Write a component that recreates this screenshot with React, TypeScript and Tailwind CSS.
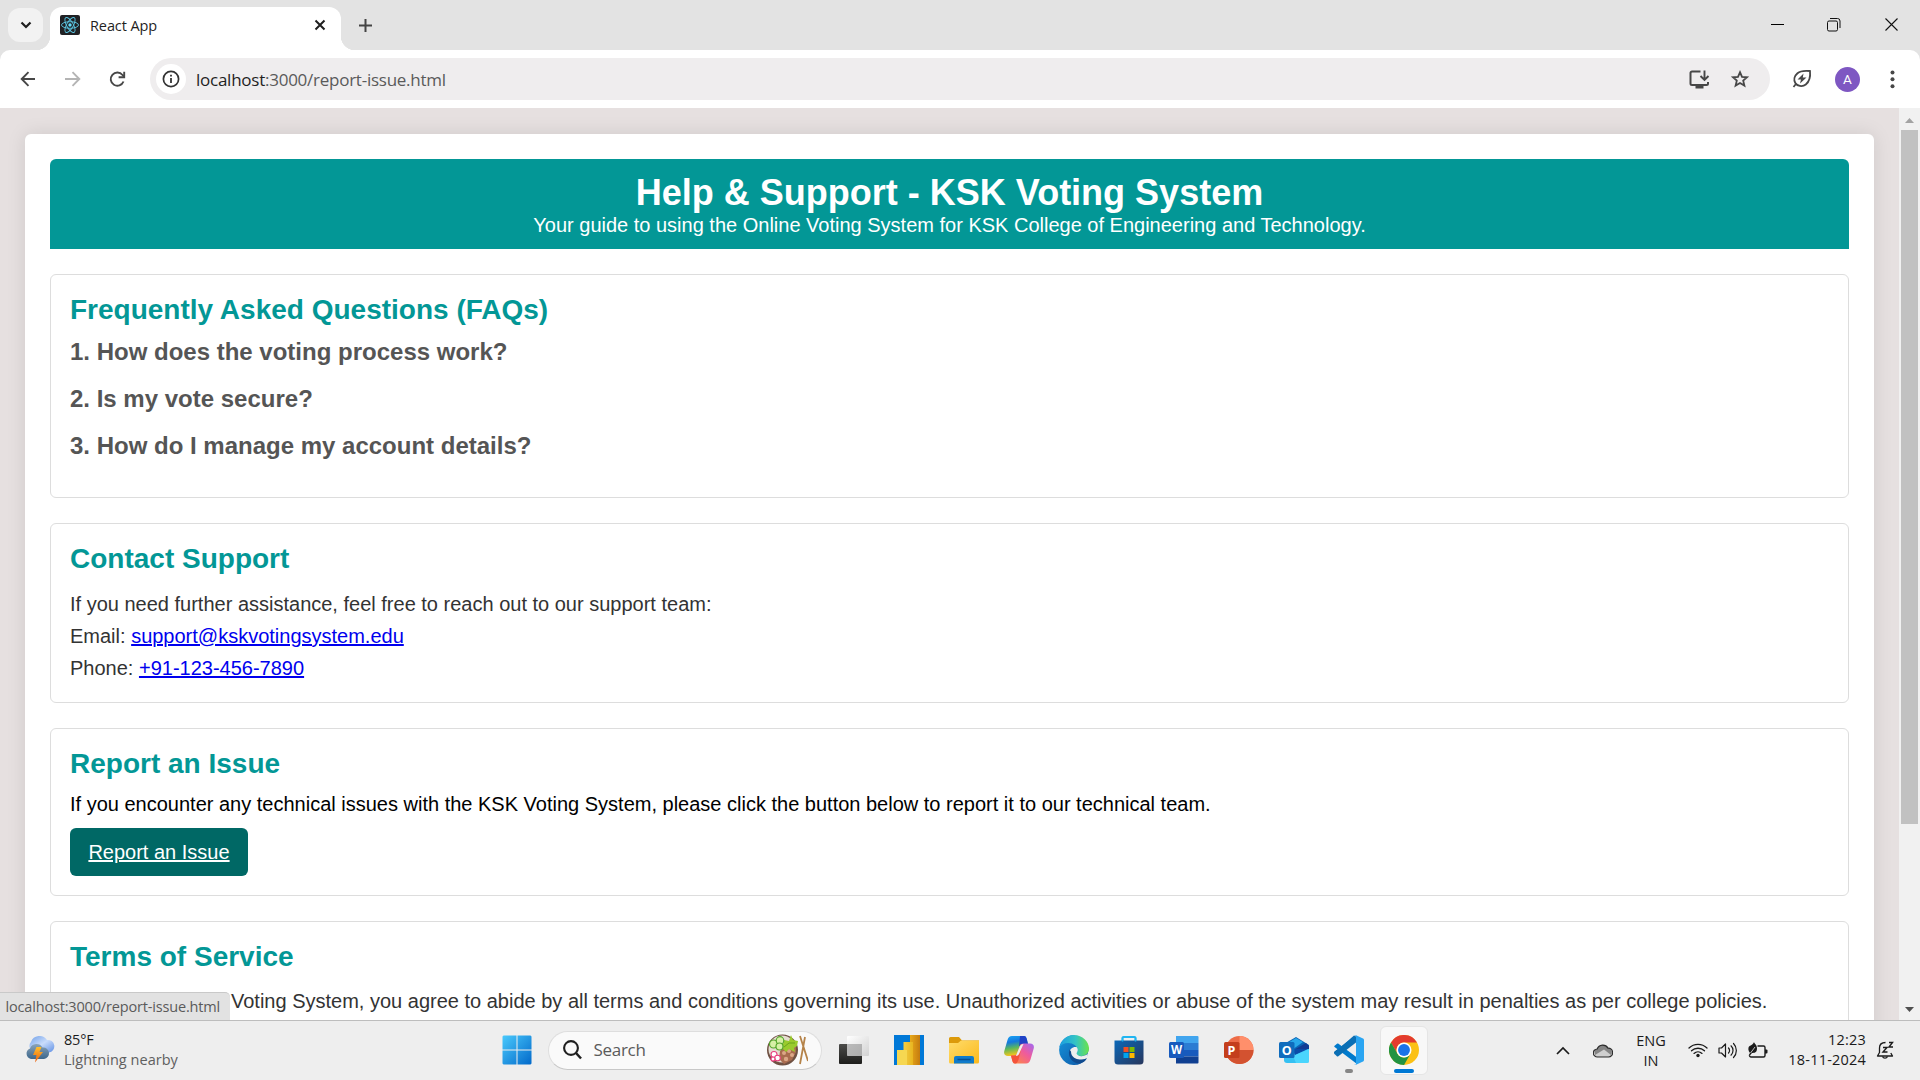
import React from "react";

const Svg = ({ w = 30, h = 30, vb, children, className = "" }: { w?: number; h?: number; vb?: string; children: React.ReactNode; className?: string }) => (
  <svg width={w} height={h} viewBox={vb ?? `0 0 ${w} ${h}`} className={`block shrink-0 ${className}`} fill="none">
    {children}
  </svg>
);

function TabStrip() {
  return (
    <div className="flex h-[50px] bg-[#e3e3e3]">
      <div className="mt-2 ml-2 flex h-[34px] w-[35px] items-center justify-center rounded-xl bg-[#f2f2f2]">
        <Svg w={12} h={8}>
          <path d="M1.5 1.5 6 6l4.500-4.500" stroke="#1f1f1f" strokeWidth="2.200" />
        </Svg>
      </div>
      <div className="relative mt-[7px] ml-[7px] flex h-[43px] w-[291px] items-center rounded-t-xl bg-white pb-[7px] pl-[10px]">
        <div className="absolute bottom-0 -left-[14px] size-[14px] bg-[radial-gradient(circle_at_0_0,transparent_14px,#fff_14.500px)]" />
        <div className="absolute -right-[14px] bottom-0 size-[14px] bg-[radial-gradient(circle_at_100%_0,transparent_14px,#fff_14.500px)]" />
        <Svg w={20} h={20}>
          <rect width="20" height="20" rx="2" fill="#202124" />
          <g stroke="#5cc8e4" strokeWidth="0.900">
            <ellipse cx="10" cy="10" rx="8.500" ry="3.300" />
            <ellipse cx="10" cy="10" rx="8.500" ry="3.300" transform="rotate(60 10 10)" />
            <ellipse cx="10" cy="10" rx="8.500" ry="3.300" transform="rotate(120 10 10)" />
          </g>
          <circle cx="10" cy="10" r="1.700" fill="#61dafb" />
        </Svg>
        <span className="mt-px ml-[10px] text-[14.500px] tracking-[-0.100px] text-[#1f1f1f]">React App</span>
        <Svg w={12} h={12} className="mr-[15px] ml-auto">
          <path d="M1.500 1.500l9 9M10.500 1.500l-9 9" stroke="#1f1f1f" strokeWidth="2" />
        </Svg>
      </div>
      <Svg w={13} h={13} className="mt-[19px] ml-[18px]">
        <path d="M6.500 0v13M0 6.500h13" stroke="#444" strokeWidth="2" />
      </Svg>
      <div className="ml-auto flex pt-[17px] pr-[21px]">
        <Svg w={15} h={15} className="mr-[41px]">
          <path d="M1 7.500h13" stroke="#000" />
        </Svg>
        <Svg w={15} h={15} className="mr-[43px]">
          <rect x="1.500" y="4" width="10" height="10" rx="1.500" stroke="#111" />
          <path d="M4 1.500h7.500a2.500 2.500 0 0 1 2.500 2.500V11" stroke="#111" />
        </Svg>
        <Svg w={15} h={15}>
          <path d="M1.500 1.500l12 12M13.500 1.500l-12 12" stroke="#111" strokeWidth="1.100" />
        </Svg>
      </div>
    </div>
  );
}

function Toolbar() {
  return (
    <div className="bg-[#e3e3e3]">
      <div className="flex h-[58px] items-center rounded-t-[10px] bg-white">
        <Svg w={16} h={16} className="ml-5">
          <path d="M15 8H2M8.500 1.200 1.700 8l6.800 6.800" stroke="#474747" strokeWidth="1.900" />
        </Svg>
        <Svg w={16} h={16} className="ml-[29px]">
          <path d="M0 8h14M7.500 1.200 14.300 8l-6.800 6.800" stroke="#b4b4b4" strokeWidth="1.900" />
        </Svg>
        <Svg w={17} h={17} className="ml-[28px]">
          <path d="M14.500 10.500A6.600 6.600 0 1 1 13.500 4l1.500 1.700" stroke="#474747" strokeWidth="1.900" />
          <path d="M15.200.8V6.300H9.600" stroke="#474747" strokeWidth="1.900" />
        </Svg>
        <div className="ml-[24px] flex h-[42px] w-[1620px] items-center rounded-full bg-[#efedee] pl-[6px]">
          <div className="flex size-[30px] items-center justify-center rounded-full bg-white">
            <Svg w={18} h={18}>
              <circle cx="9" cy="9" r="7.600" stroke="#333" strokeWidth="1.700" />
              <path d="M9 8v5M9 4.800v1.800" stroke="#333" strokeWidth="1.800" />
            </Svg>
          </div>
          <span className="mt-px ml-[10px] text-[17px] tracking-[-0.250px] text-[#1f1f1f]">
            localhost<span className="text-[#5a5a5a]">:3000/report-issue.html</span>
          </span>
          <Svg w={21} h={19} className="mr-[20px] ml-auto">
            <path d="M11.500 1.500H3a1.500 1.500 0 0 0-1.500 1.500v10.500A1.500 1.500 0 0 0 3 15h14.500a1.500 1.500 0 0 0 1.500-1.500V12" stroke="#474747" strokeWidth="2" />
            <path d="M6.500 16h8v2.500h-8z" fill="#474747" />
            <path d="M15.500.5v9M11.500 6l4 4 4-4" stroke="#474747" strokeWidth="1.900" />
          </Svg>
          <Svg w={20} h={20} className="mr-[20px]">
            <path d="M10 3.200l2 4.700 5 .4-3.800 3.300 1.200 5L10 14l-4.400 2.600 1.200-5L3 8.300l5-.4z" stroke="#474747" strokeWidth="1.800" />
          </Svg>
        </div>
        <Svg w={20} h={20} className="ml-[22px]">
          <path d="M18 2c-6-.600-10 0-12.500 2.200C2.200 7 1.500 11 3.300 14c1.700 3 7 4.300 10.500 1.500C17.500 12.500 18.600 8 18 2zM4.300 14.500 1.500 18" stroke="#474747" strokeWidth="1.800" />
          <path d="M11.500 4.500 5.500 10.500h3.500l-1 4 6.500-6h-3.700z" fill="#474747" />
        </Svg>
        <div className="ml-[23px] flex size-[25px] items-center justify-center rounded-full bg-[#7e57c2] font-['Roboto',sans-serif] text-[13.500px] text-white">A</div>
        <Svg w={5} h={19} className="ml-[30px]">
          <g fill="#474747">
            <circle cx="2.500" cy="2.500" r="2" />
            <circle cx="2.500" cy="9.300" r="2" />
            <circle cx="2.500" cy="16.200" r="2" />
          </g>
        </Svg>
      </div>
    </div>
  );
}

const Card = ({ title, className, children }: { title: string; className: string; children: React.ReactNode }) => (
  <section className={`mt-[25px] shrink-0 rounded-[6px] border border-[#ddd] px-[19px] pt-[19px] ${className}`}>
    <h2 className="text-[28px] leading-8 font-bold text-[#039796]">{title}</h2>
    {children}
  </section>
);

const questions = ["1. How does the voting process work?", "2. Is my vote secure?", "3. How do I manage my account details?"];

function Page() {
  return (
    <div className="flex h-[912px] overflow-hidden bg-[#e6e0e0] font-['Liberation_Sans',Arial,sans-serif] text-[20px]">
      <div className="mt-[26px] ml-[25px] flex h-[1100px] w-[1849px] flex-col rounded-[6px] bg-white p-[25px] shadow-[0_0_19px_rgba(0,0,0,0.1)]">
        <header className="h-[90px] shrink-0 rounded-t-[6px] bg-[#039796] pt-[13px] text-center text-white">
          <h1 className="text-[36px] leading-[41px] font-bold">Help &amp; Support - KSK Voting System</h1>
          <p className="mt-px leading-[23px]">Your guide to using the Online Voting System for KSK College of Engineering and Technology.</p>
        </header>
        <Card title="Frequently Asked Questions (FAQs)" className="h-[224px]">
          <div className="mt-3 flex flex-col gap-5">
            {questions.map((q) => (
              <h3 key={q} className="text-[24px] leading-[27px] font-bold text-[#555]">{q}</h3>
            ))}
          </div>
        </Card>
        <Card title="Contact Support" className="h-[180px]">
          <div className="mt-[13px] leading-8 text-[#333]">
            <p>If you need further assistance, feel free to reach out to our support team:</p>
            <p>Email: <a className="text-[#0000ee] underline">support@kskvotingsystem.edu</a></p>
            <p>Phone: <a className="text-[#0000ee] underline">+91-123-456-7890</a></p>
          </div>
        </Card>
        <Card title="Report an Issue" className="h-[168px]">
          <p className="mt-[13px] leading-[23px] text-black">
            If you encounter any technical issues with the KSK Voting System, please click the button below to report it to our technical team.
          </p>
          <a className="mt-3 flex h-12 w-[178px] items-center justify-center rounded-[6px] bg-[#006865] text-white underline">Report an Issue</a>
        </Card>
        <Card title="Terms of Service" className="h-[200px]">
          <p className="mt-3 pl-[161px] leading-8 whitespace-nowrap text-[#333]">
            Voting System, you agree to abide by all terms and conditions governing its use. Unauthorized activities or abuse of the system may result in penalties as per college policies.
          </p>
        </Card>
      </div>
      <div className="ml-auto flex w-[21px] flex-col items-center bg-[#f1f1f1] pt-[10px]">
        <Svg w={9} h={5}><path d="M0 5 4.500 0 9 5z" fill="#a3a3a3" /></Svg>
        <div className="mt-[7px] h-[694px] w-[17px] bg-[#c1c1c1]" />
        <Svg w={9} h={5} className="mt-auto mb-2"><path d="M0 0l4.500 5L9 0z" fill="#505050" /></Svg>
      </div>
    </div>
  );
}

function Weather() {
  return (
    <div className="flex w-[489.500px] items-center pl-[25px]">
      <Svg>
        <defs>
          <linearGradient id="wa" x2="1" y2="1"><stop stopColor="#6f9fe8" /><stop offset=".5" stopColor="#c9dcfb" /><stop offset="1" stopColor="#5f8fe4" /></linearGradient>
          <linearGradient id="wb" x2="0" y2="1"><stop stopColor="#8aa3b8" /><stop offset="1" stopColor="#3d678c" /></linearGradient>
          <linearGradient id="wc" x2="0" y2="1"><stop stopColor="#ffc02e" /><stop offset="1" stopColor="#ea5b0c" /></linearGradient>
        </defs>
        <path d="M7 16a6 6 0 0 1-1-9 9 9 0 0 1 16-2 6.300 6.300 0 0 1 2 12.500z" fill="url(#wa)" />
        <path d="M6 24a5.500 5.500 0 0 1-1-10.500 7 7 0 0 1 12.500-1A5.600 5.600 0 0 1 19 24z" fill="url(#wb)" />
        <path d="M11.500 12h5l-2 5h3.500l-8 10.500 1.500-7.500H8z" fill="url(#wc)" />
      </Svg>
      <div className="ml-[9px] text-[14.500px] leading-5">
        <div className="tracking-[-0.200px] text-[#1b1b1b]">85°F</div>
        <div className="tracking-[0.030px] text-[#606060]">Lightning nearby</div>
      </div>
    </div>
  );
}

const Cell = ({ children }: { children: React.ReactNode }) => (
  <div className="relative flex h-full w-[55px] shrink-0 items-center justify-center">{children}</div>
);

function Apps() {
  return (
    <>
      <Cell>
        <Svg>
          <defs><linearGradient id="win" gradientUnits="userSpaceOnUse" x1="0" y1="0" x2="30" y2="30"><stop stopColor="#4bcbfd" /><stop offset="1" stopColor="#0067c9" /></linearGradient></defs>
          <path d="M1.500.5H14.500v14H.5v-13zM15.500.5H28.500l1 1v13h-14zM.5 15.500h14v14h-13l-1-1zM15.500 15.500h14v13l-1 1h-13z" fill="url(#win)" />
        </Svg>
      </Cell>
      <div className="ml-[3px] flex h-[39px] w-[274px] shrink-0 items-center rounded-full border border-b-[#c8c8c8] border-[#dedede] bg-[#fafafa] pl-[14px]">
        <Svg w={19} h={20}>
          <circle cx="8" cy="8" r="6.900" stroke="#1f1f1f" strokeWidth="2.100" />
          <path d="M13 13l5 5.500" stroke="#1f1f1f" strokeWidth="2.500" />
        </Svg>
        <span className="ml-[12px] text-[17px] tracking-[-0.300px] text-[#5b5b5b]">Search</span>
        <Svg w={42} h={32} className="mr-[13px] ml-auto">
          <circle cx="16.500" cy="16" r="15.500" fill="#6f5143" />
          <circle cx="16" cy="15" r="13.500" fill="#e5ddd1" />
          <path d="M14 17l4-4 12-1v6l-4 8-8 4-5-5z" fill="#a96c4f" />
          <g fill="#dba787"><circle cx="18" cy="19" r="2" /><circle cx="23" cy="17" r="2" /><circle cx="20" cy="25" r="2.200" /><circle cx="26" cy="21" r="2" /></g>
          <path d="M16 14l2-8 5 1 2-6 2 5 5 1-1 5-3 2 1 4-6-3-3 3z" fill="#9acb2d" />
          <path d="M18 13l5-4 6 0" stroke="#6ba51a" />
          <g fill="#d7f0a6" stroke="#55a62c" strokeWidth="1.200"><circle cx="7.500" cy="10" r="4" /><circle cx="14" cy="6.500" r="3.800" /><circle cx="13.500" cy="12.500" r="3.500" /></g>
          <g fill="#fff" stroke="#e83d7d" strokeWidth="1.100"><circle cx="8" cy="20.500" r="3" /><circle cx="11.500" cy="24" r="2.800" /><circle cx="7" cy="25" r="2" /></g>
          <path d="M34 2l8 25M39 3l-5 27" stroke="#b58349" strokeWidth="1.800" />
        </Svg>
      </div>
      <div className="w-[4.500px] shrink-0" />
      <Cell>
        <Svg>
          <defs>
            <linearGradient id="tva" x2="0" y2="1"><stop stopColor="#4c4c4a" /><stop offset="1" stopColor="#1d1d1b" /></linearGradient>
            <linearGradient id="tvb" x2="1" y2="1"><stop stopColor="#fff" /><stop offset="1" stopColor="#d2d2d2" /></linearGradient>
          </defs>
          <rect x="0" y="9" width="23" height="20" rx="1" fill="url(#tva)" />
          <rect x="8" y="1" width="22" height="20" rx="1" fill="url(#tvb)" />
          <path d="M8 9h15v12H8z" fill="#888" opacity=".55" />
        </Svg>
      </Cell>
      <Cell>
        <Svg>
          <defs>
            <linearGradient id="pba" x2="1"><stop stopColor="#e7a91a" /><stop offset="1" stopColor="#c57b0f" /></linearGradient>
            <linearGradient id="pbb" x2="1"><stop stopColor="#f3cd45" /><stop offset="1" stopColor="#e8b51f" /></linearGradient>
          </defs>
          <path d="M0 0h30v30H0z" fill="#0078d7" />
          <path d="M16 0h10v30H16z" fill="url(#pba)" />
          <path d="M9.500 7h9.500v23H9.500z" fill="url(#pbb)" />
          <path d="M3 15h10v15H3z" fill="#f6d751" />
        </Svg>
      </Cell>
      <Cell>
        <Svg>
          <defs><linearGradient id="fo" x2="1" y2="1"><stop stopColor="#ffdc6b" /><stop offset="1" stopColor="#fbb91c" /></linearGradient></defs>
          <path d="M0 3.500A1.500 1.500 0 0 1 1.500 2H10l3 3.500h17V12H0z" fill="#dc9a0b" />
          <path d="M0 8h9l3-2.500h18V27a1.500 1.500 0 0 1-1.500 1.500h-27A1.500 1.500 0 0 1 0 27z" fill="url(#fo)" />
          <path d="M5 28.500V23a2 2 0 0 1 2-2h16a2 2 0 0 1 2 2v5.500z" fill="#0f7bcb" />
          <path d="M8.500 24.500h13" stroke="#064f92" strokeWidth="1.500" />
        </Svg>
      </Cell>
      <Cell>
        <Svg>
          <defs>
            <linearGradient id="coa" x2="0.2" y2="1"><stop stopColor="#1aa6f5" /><stop offset=".35" stopColor="#1478dd" /><stop offset=".65" stopColor="#5cb85b" /><stop offset="1" stopColor="#f5c51c" /></linearGradient>
            <linearGradient id="cob" x1="1" x2="0.1" y2="1"><stop stopColor="#a06af3" /><stop offset=".45" stopColor="#ef5b9c" /><stop offset="1" stopColor="#ff8a3d" /></linearGradient>
          </defs>
          <path d="M8 1h12c2 0 2.500 2 3 4l1 4h-5c-2 0-3 1-3.500 3l-2 6c-.8 2-2 3-4 3H4c-3 0-4.500-2-3.700-5L3.500 5C4.300 2.500 5.500 1 8 1z" fill="url(#coa)" />
          <path d="M16 1h4c2 0 2.500 2 3 4l1 4h-5c-2 0-3.300 1-4 3z" fill="#2042c6" />
          <path d="M22 28.500H11c-2 0-2.500-2-3-4l-1-4h3c2 0 3-1 3.500-3l2-6c.8-2 2-3 4-3H26c3 0 4.500 2 3.700 5l-3.200 11c-.8 2.500-2 4-4.500 4z" fill="url(#cob)" />
          <path d="M7 20.500h3c2 0 3-1 3.500-3l3-8h2l-3.500 13c-.5 3-1.500 6-4 6-2 0-2.500-2-3-4z" fill="#f4533b" />
          <path d="M15.500 12c.7-2 2-3 4-3l-4 9c-.7 2-2 3-3.700 3z" fill="#eee" />
        </Svg>
      </Cell>
      <Cell>
        <Svg>
          <defs>
            <linearGradient id="ea" x2="1"><stop stopColor="#1b9de2" /><stop offset=".55" stopColor="#33c4c4" /><stop offset="1" stopColor="#6be34c" /></linearGradient>
            <linearGradient id="eb" x2="1" y2="1"><stop stopColor="#1596dd" /><stop offset="1" stopColor="#0f55a4" /></linearGradient>
          </defs>
          <path d="M15 0a15 15 0 1 0 12.500 23.500L30 13z" fill="url(#eb)" />
          <path d="M.3 12.500C1.800 5 8 0 15 0c8.500 0 15 6.500 15 13.500 0 5-4 7.500-8 7.500-3 0-4.800-1-4.800-2 0-.8 1.300-1.300 1.300-4 0-4-4.500-7-9.300-7C5 8 1.800 10 .3 12.500z" fill="url(#ea)" />
          <path d="M10.500 18c0-4 3-6.500 7-6 1.500 1.500 1.700 3.500.7 5-1 1.200-.6 2.500.8 3.300 2.500 1.500 6.500 1 9.500-1.300v4l-5 2c-7 0-13-2-13-7z" fill="#eee" />
          <path d="M10.500 14.500C8 22 14 29 21 28.500c3-.5 5.500-2.500 6.800-5C22 26 12 24.500 12 16.500z" fill="#104b8f" />
        </Svg>
      </Cell>
      <Cell>
        <Svg>
          <defs><linearGradient id="st" x2="1" y2="1"><stop stopColor="#0b68b8" /><stop offset="1" stopColor="#28365c" /></linearGradient></defs>
          <path d="M8.500 7V3a1 1 0 0 1 1-1h11a1 1 0 0 1 1 1v4" stroke="#20b5f1" strokeWidth="2" />
          <path d="M.5 5.500h29V26a3.500 3.500 0 0 1-3.500 3.500H4A3.500 3.500 0 0 1 .5 26z" fill="url(#st)" />
          <path d="M8.500 2.500v4h13v-4" stroke="#20b5f1" strokeWidth="1.600" strokeDasharray="4 13 4" />
          <path d="M9.500 12h5v5h-5z" fill="#f25022" /><path d="M15.500 12h5v5h-5z" fill="#7fba00" />
          <path d="M9.500 18h5v5h-5z" fill="#00a4ef" /><path d="M15.500 18h5v5h-5z" fill="#ffb900" />
        </Svg>
      </Cell>
      <Cell>
        <Svg>
          <path d="M7 1h21.500a1 1 0 0 1 1 1v6H7z" fill="#41a5ee" />
          <path d="M7 8h22.500v7H7z" fill="#2b7cd3" />
          <path d="M7 15h22.500v6.500H7z" fill="#185abd" />
          <path d="M7 21.500h22.500v6a1 1 0 0 1-1 1H7z" fill="#103f91" />
          <rect x="0" y="7" width="15" height="16" rx="1.500" fill="#185abd" />
          <text x="7.500" y="19" textAnchor="middle" fontSize="11.500" fontWeight="bold" fill="#fff" fontFamily="Open Sans">W</text>
        </Svg>
      </Cell>
      <Cell>
        <Svg>
          <circle cx="15.500" cy="15" r="14" fill="#ed6c47" />
          <path d="M15.500 1a14 14 0 0 1 14 14h-14z" fill="#ff8f6b" />
          <path d="M1.500 15h28a14 14 0 0 1-28 0z" fill="#d35230" />
          <rect x="0" y="7" width="15.500" height="16" rx="1.500" fill="#c43e1c" />
          <text x="7.500" y="19.500" textAnchor="middle" fontSize="12.500" fontWeight="bold" fill="#fff" fontFamily="Open Sans">P</text>
        </Svg>
      </Cell>
      <Cell>
        <Svg>
          <path d="M5 9 17 2l13 8v7H5z" fill="#0a64b5" />
          <path d="M7 9l10-6 7 4-14 10z" fill="#28a8ea" />
          <path d="M13 16 27 8l3 3v4l-15 8z" fill="#123b94" />
          <path d="M5 14l25 0v12a2 2 0 0 1-2 2H8a3 3 0 0 1-3-3z" fill="#35c0f2" />
          <path d="M13 14h16L16 20z" fill="#0a4ba8" />
          <path d="M30 14v12c0 1.500-1 2-2 2H17l-3-7z" fill="#50d9ff" opacity=".8" />
          <rect x="0" y="7" width="15.500" height="16" rx="1.500" fill="#0f6cbd" />
          <text x="7.700" y="19.500" textAnchor="middle" fontSize="12.500" fontWeight="bold" fill="#fff" fontFamily="Open Sans">O</text>
        </Svg>
      </Cell>
      <Cell>
        <Svg>
          <path d="M22 0 3.500 17.500 1 19.500.2 18c-.3-.600-.2-1 .3-1.500L22 0z" fill="#0065a9" />
          <path d="M1.500 10 3 8.700c.500-.400 1-.400 1.500 0L23 22.500V29L.6 12c-.500-.500-.500-1 0-1.300z" fill="#007acc" />
          <path d="M22 7.500 4.300 21.300c-.500.300-1 .300-1.400 0L.6 19c-.400-.500-.400-1 0-1.400L20 .5 23 2z" fill="#0a6fb5" />
          <path d="M22 .2 28.500 3.200c1 .400 1.500 1 1.500 2v19.600c0 1-.500 1.600-1.500 2L22 29.800c-.800.300-1.500.100-2-.400.900.700 2 .1 2-1V1.600c0-1.100-1.100-1.700-2-1 .500-.500 1.200-.700 2-.4z" fill="#2aa5f2" />
        </Svg>
        <div className="absolute bottom-1.5 left-6 h-1 w-2 rounded-full bg-[#868686]" />
      </Cell>
      <Cell>
        <div className="flex h-[49px] w-[48px] items-center justify-center rounded-md border border-[#e5e5e5] bg-[#f8f8f8]">
          <Svg vb="0 0 48 48">
            <circle cx="24" cy="24" r="24" fill="#fbc116" />
            <path d="M3.200 12A24 24 0 0 1 44.800 12H24a12 12 0 0 0-10.400 18z" fill="#e33b2e" />
            <path d="M3.200 12A24 24 0 0 0 24 48l10.400-18a12 12 0 0 1-20.800 0z" fill="#229342" />
            <circle cx="24" cy="24" r="12" fill="#fff" />
            <circle cx="24" cy="24" r="9.500" fill="#1a73e8" />
          </Svg>
        </div>
        <div className="absolute bottom-1.5 left-[18px] h-1 w-5 rounded-full bg-[#0078d4]" />
      </Cell>
    </>
  );
}

function Tray() {
  return (
    <div className="ml-auto flex items-center pr-[20px] text-[14.500px] leading-5 text-[#1b1b1b]">
      <div className="flex w-10 justify-center"><Svg w={14} h={9}><path d="M1 8l6-6 6 6" stroke="#1b1b1b" strokeWidth="1.700" /></Svg></div>
      <div className="flex w-10 justify-center">
        <Svg w={20} h={15}>
          <path d="M4.500 13.500a4 4 0 0 1-.3-7.700A6 6 0 0 1 15 5a4.300 4.300 0 0 1 .5 8.500z" fill="#858585" />
          <path d="M2 12l9-5.500 7 5.500-1.500 1.500H4z" fill="#cfcfcf" />
          <path d="M4.500 14a4 4 0 0 1-.3-8A6 6 0 0 1 15 5.200a4.300 4.300 0 0 1 .5 8.800z" stroke="#2c2c2c" strokeWidth="1.200" />
        </Svg>
      </div>
      <div className="w-14 pt-px text-center">ENG<br />IN</div>
      <div className="ml-1 flex w-[30px] justify-center">
        <Svg w={20} h={16}>
          <g stroke="#1b1b1b" strokeWidth="1.300" strokeLinecap="round">
            <path d="M1 6a13 13 0 0 1 18 0M3.500 8.800a9.500 9.500 0 0 1 13 0M6 11.400a6 6 0 0 1 8 0" />
          </g>
          <circle cx="10" cy="13.500" r="1.700" fill="#1b1b1b" />
        </Svg>
      </div>
      <div className="flex w-[30px] justify-center">
        <Svg w={20} h={17}>
          <path d="M1 6h2.500l4-4v13l-4-4H1z" stroke="#1b1b1b" strokeWidth="1.200" strokeLinejoin="round" />
          <path d="M10.500 6a3.500 3.500 0 0 1 0 5M13 3.800a6.500 6.500 0 0 1 0 9.400M15.500 1.500a10 10 0 0 1 0 14" stroke="#1b1b1b" strokeWidth="1.200" strokeLinecap="round" />
        </Svg>
      </div>
      <div className="flex w-[30px] justify-center">
        <Svg w={20} h={17}>
          <path d="M9.500 4h6A1.500 1.500 0 0 1 17 5.500v8a1.500 1.500 0 0 1-1.500 1.500H3a1.500 1.500 0 0 1-1.500-1.500" stroke="#1b1b1b" strokeWidth="1.400" />
          <path d="M17 7.500h1.500a1 1 0 0 1 1 1v2a1 1 0 0 1-1 1H17z" fill="#1b1b1b" />
          <path d="M6 0c.500 2 3 2.500 3 6.500S6.500 11 4 11l-2.500 3-.8-.7L2 11C0 9 0 6 1 4.500 2 3.500 5 3 6 0z" fill="#1b1b1b" />
          <path d="M7 5 2.500 11" stroke="#eee" strokeWidth=".8" />
        </Svg>
      </div>
      <div className="w-[93px] text-right tracking-[0.200px]">12:23<br />18-11-2024</div>
      <div className="ml-1 flex w-[30px] justify-center">
        <Svg w={18} h={19}>
          <path d="M9.500 1.500C5.500 1.500 3.500 4 3.500 7v4.500L1.500 15h15l-1.700-3" stroke="#1b1b1b" strokeWidth="1.300" strokeLinejoin="round" />
          <path d="M6.500 15.500a2.700 2.700 0 0 0 5 0" stroke="#1b1b1b" strokeWidth="1.300" />
          <path d="M7 6.500h4L7 11h4.500M13 1.500h3.500L13 6h4" stroke="#1b1b1b" strokeWidth="1.400" />
        </Svg>
      </div>
    </div>
  );
}

export default function App() {
  return (
    <div className="relative flex h-[1080px] w-[1920px] flex-col overflow-hidden font-['Open_Sans','Noto_Sans',sans-serif]">
      <TabStrip />
      <Toolbar />
      <Page />
      <div className="absolute top-[992px] left-0 flex h-[28px] w-[230px] items-center rounded-tr-[5px] border-t border-[#c9c9c9] bg-[#e2e2e2] pl-[5.500px] text-[14.500px] tracking-[-0.170px] text-[#5a5a5a]">
        <span className="whitespace-nowrap">localhost:3000/report-issue.html</span>
      </div>
      <div className="flex h-[60px] shrink-0 border-t border-[#bdbdbd] bg-[#eee] pb-px">
        <Weather />
        <div className="flex items-center">
          <Apps />
        </div>
        <Tray />
      </div>
    </div>
  );
}
